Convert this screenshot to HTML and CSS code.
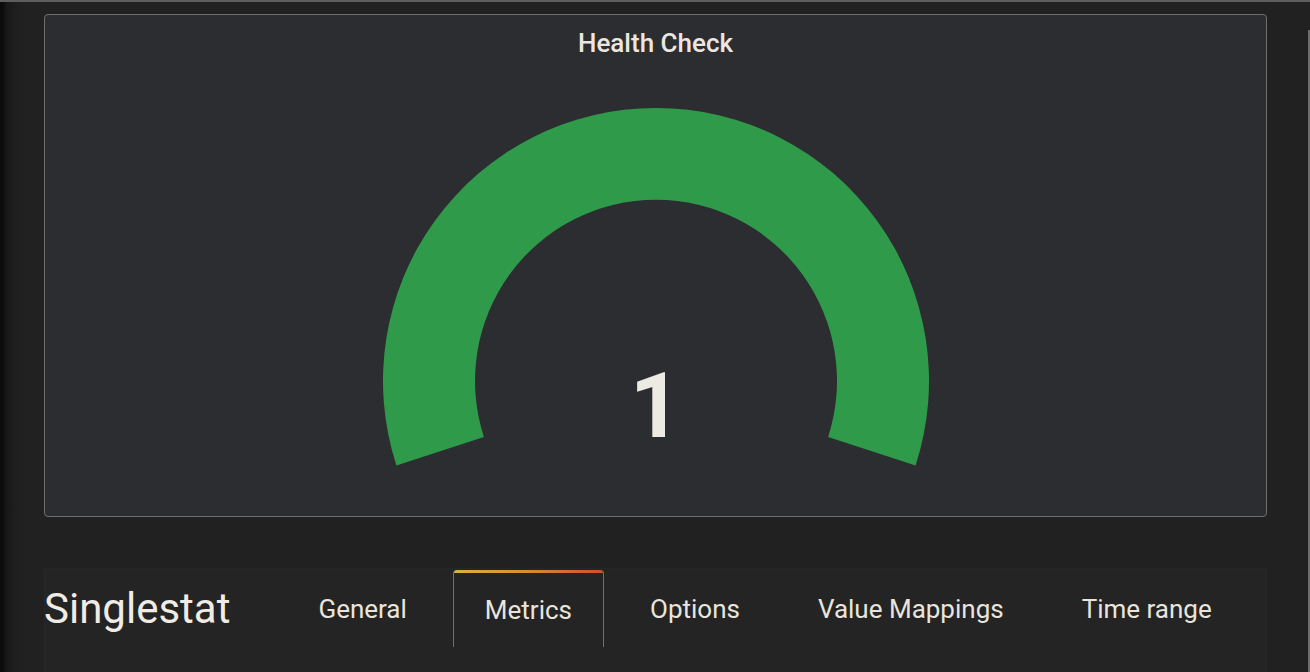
FILE: index.html
```html
<!DOCTYPE html>
<html>
<head>
<meta charset="utf-8">
<link rel="stylesheet" href="styles.css">
</head>
<body>
<div class="topline"></div>
<div class="page">
  <main class="main">
    <section class="panel">
      <h2 class="panel-title">Health Check</h2>
      <div class="gauge">
        <svg class="gauge-svg" width="560" height="366" viewBox="0 0 560 366">
          <path d="M20.4 361.4 A273 273 0 1 1 539.6 361.4 L452.1 332.9 A181 181 0 1 0 107.9 332.9 Z" fill="#2f9b4a"/>
        </svg>
        <div class="gauge-value">1</div>
      </div>
    </section>
    <section class="editor">
      <div class="editor-head">
        <h1 class="editor-title">Singlestat</h1>
        <nav class="tabs">
          <div class="tab">General</div>
          <div class="tab active">Metrics</div>
          <div class="tab">Options</div>
          <div class="tab">Value Mappings</div>
          <div class="tab">Time range</div>
        </nav>
      </div>
    </section>
  </main>
  <div class="scroll"><div class="thumb"></div></div>
</div>
</body>
</html>
```
FILE: styles.css
```css
html, body {
  margin: 0;
  padding: 0;
}
body {
  width: 1310px;
  height: 672px;
  overflow: hidden;
  font-family: Roboto, "Liberation Sans", sans-serif;
  color: #ece8e1;
  background: linear-gradient(to right, #0b0b0b 0, #0b0b0b 3px, #171717 6px, #1f1f1f 16px, #212121 26px);
}
.topline {
  height: 2px;
  background: #5e5e5e;
}
.page {
  display: flex;
  height: 670px;
}
.main {
  flex: 1;
  padding: 12px 0 0 44px;
}
.panel {
  box-sizing: border-box;
  width: 1223px;
  height: 503px;
  background: #2c2d31;
  border: 1px solid #6e6e6c;
  border-radius: 4px;
  padding-top: 13px;
  display: flex;
  flex-direction: column;
  align-items: center;
}
.panel-title {
  margin: 0;
  font-size: 26px;
  line-height: 30px;
  font-weight: 500;
  color: #ebe7e0;
}
.gauge {
  margin-top: 46px;
  display: grid;
  justify-items: center;
}
.gauge-svg {
  grid-area: 1 / 1;
  display: block;
}
.gauge-value {
  grid-area: 1 / 1;
  margin-top: 258px;
  font-size: 90px;
  line-height: 90px;
  font-weight: 700;
  color: #ede9e3;
}
.editor {
  box-sizing: border-box;
  width: 1223px;
  height: 104px;
  margin-top: 51px;
  background: #242424;
  box-shadow: inset 1px 0 0 #272727, inset -1px 0 0 #272727, inset 0 1px 0 #262626;
  padding-top: 2px;
}
.editor-head {
  display: flex;
  align-items: center;
}
.editor-title {
  margin: 0 56px 0 0;
  font-size: 42px;
  line-height: 42px;
  font-weight: 400;
  color: #f0ece5;
}
.tabs {
  display: flex;
  gap: 14px;
}
.tab {
  box-sizing: border-box;
  height: 77px;
  padding: 0 31px;
  display: flex;
  align-items: center;
  font-size: 26px;
  color: #e9e5de;
  border: 1px solid transparent;
  border-bottom: none;
}
.tab.active {
  border-color: #707070;
  border-radius: 4px 4px 0 0;
  background: linear-gradient(90deg, #dcb23e 0%, #d88a33 50%, #cf4f2b 100%) top left / 100% 3px no-repeat, #242424;
  border-top: none;
  padding-top: 2px;
}
.scroll {
  width: 2px;
  display: flex;
  flex-direction: column;
}
.thumb {
  margin-top: 28px;
  flex: 1;
  background: #6d6d6d;
}
```
